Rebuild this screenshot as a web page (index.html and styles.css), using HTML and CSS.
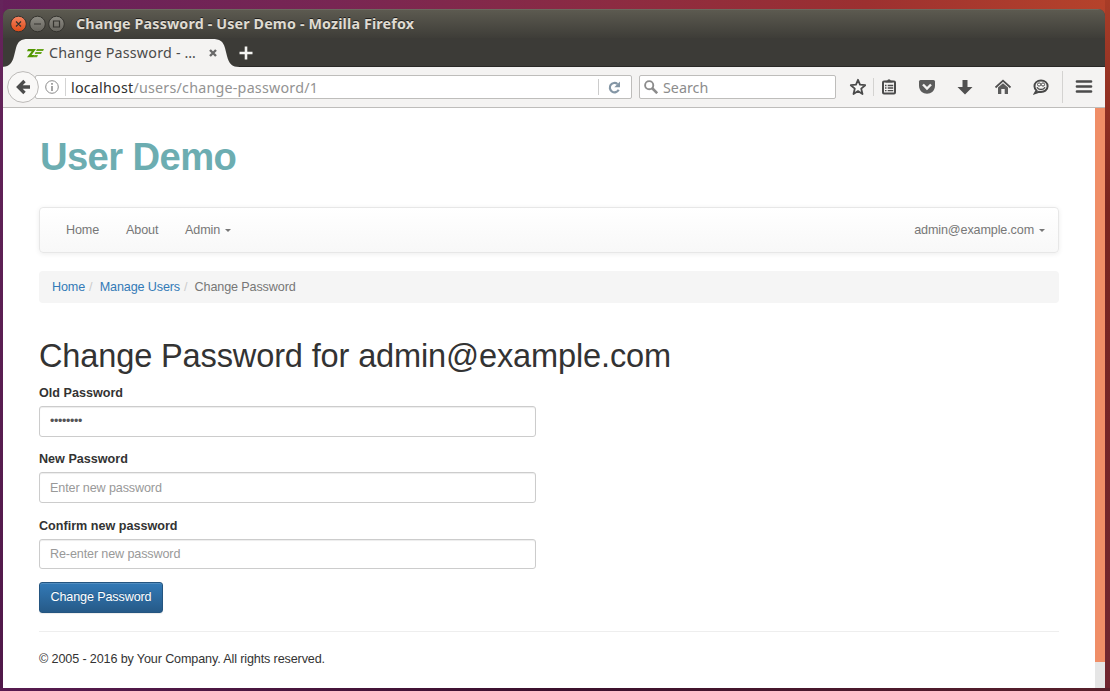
FILE: index.html
```
<!DOCTYPE html>
<html lang="en">
<head>
<meta charset="utf-8">
<title>Change Password - User Demo</title>
<link rel="stylesheet" href="styles.css">
</head>
<body>
<div class="window">
  <header class="chrome">
    <div class="titlebar">
      <svg class="controls" width="56" height="18" viewBox="0 0 56 18">
        <defs>
          <linearGradient id="close" x1="0" y1="0" x2="0" y2="1"><stop offset="0" stop-color="#f58462"/><stop offset="1" stop-color="#df4a16"/></linearGradient>
          <linearGradient id="gray" x1="0" y1="0" x2="0" y2="1"><stop offset="0" stop-color="#8e8c84"/><stop offset="1" stop-color="#66645d"/></linearGradient>
        </defs>
        <g stroke="#34332e">
          <circle cx="8.5" cy="9" r="7.8" fill="url(#close)"/>
          <circle cx="27.5" cy="9" r="7.8" fill="url(#gray)"/>
          <circle cx="46.5" cy="9" r="7.8" fill="url(#gray)"/>
          <path d="M6 6.5l5 5M11 6.5l-5 5M24 9h7M43.5 6h6v6h-6z" fill="none" stroke-width="1.2"/>
        </g>
      </svg>
      <span class="window-title">Change Password - User Demo - Mozilla Firefox</span>
    </div>
    <div class="tabs">
      <div class="tab">
        <svg class="tab-shape" width="240" height="28" viewBox="0 0 240 28"><path d="M0 28C9 28 12 25 14 17L16 9C18 2 21 0 28 0H212C220 0 223 2 225 9L227 17C229 25 232 28 240 28Z" fill="#f4f3f2"/></svg>
        <svg class="favicon" width="17" height="9" viewBox="0 0 17 9"><path d="M1 0H9L4.5 6H7.5L6.5 8.3H0L4.7 2.3H0Z" fill="#519600"/><path d="M10 0H17L16 2H9ZM8.5 3H15L14 5H7.8ZM7.4 6H11L10 8.3H6.5Z" fill="#68a51c"/></svg>
        <span class="tab-title">Change Password - …</span>
        <svg class="tab-close" width="8" height="8" viewBox="0 0 8 8"><path d="M1 1l6 6M7 1L1 7" stroke="#686868" stroke-width="2.4"/></svg>
      </div>
      <svg class="new-tab" width="14" height="14" viewBox="0 0 14 14"><path d="M7 .5v13M.5 7h13" stroke="#f5f5f2" stroke-width="2.6"/></svg>
    </div>
    <div class="toolbar">
      <svg class="back" width="32" height="32" viewBox="0 0 32 32"><circle cx="16" cy="16" r="15.4" fill="#f9f8f7" stroke="#bbb9b7"/><path d="M17.5 10L11.500 16L17.500 22M12 16H23" fill="none" stroke="#4c4c4c" stroke-width="3.4"/></svg>
      <div class="address">
        <svg class="info" width="14" height="14" viewBox="0 0 14 14"><circle cx="7" cy="7" r="6.3" fill="none" stroke="#8b8b8b"/><path d="M7 3v1.7M7 6v5" stroke="#858585" stroke-width="1.5"/></svg>
        <span class="url"><span class="host">localhost</span>/users/change-password/1</span>
        <span class="reload"><svg width="13" height="13" viewBox="0 0 13 13"><path d="M9.500 3A4.700 4.700 0 1 0 10.700 8.800" fill="none" stroke="#8496a5" stroke-width="2.200"/><path d="M12 .5V6.200H6.300Z" fill="#8496a5"/></svg></span>
      </div>
      <div class="search"><svg width="14" height="14" viewBox="0 0 14 14"><circle cx="5.2" cy="5.2" r="4.1" fill="none" stroke="#8c8c8c" stroke-width="1.9"/><path d="M8 8l5.2 5.2" stroke="#8c8c8c" stroke-width="2.6"/></svg><span class="search-text">Search</span></div>
      <svg class="actions" width="260" height="40" viewBox="0 0 260 40">
        <path d="M18 12.800L20 17.700L25.200 18.200L21.200 21.600L22.500 27L18 24.100L13.500 27L14.800 21.600L10.800 18.200L16 17.700Z" fill="#f8f8f7" stroke="#4b4b4b" stroke-width="1.8" stroke-linejoin="round"/>
        <path d="M33.5 11v18M222.5 4v32" stroke="#d4d3d1"/>
        <path d="M43 15.500q0-1 1-1h10q1 0 1 1v10q0 1-1 1h-10q-1 0-1-1Z" fill="#f4f3f2" stroke="#4b4b4b" stroke-width="2"/>
        <path d="M45.500 15.500v-1.700h1.700q.3-1.500 1.800-1.500t1.800 1.500h1.700v1.700Z" fill="#4b4b4b"/>
        <path d="M45 18.500h1.500M47.700 18.500h5.500M45 21h1.500M47.700 21h5.500M45 23.700h1.500M47.700 23.700h5.500" stroke="#4b4b4b" stroke-width="1.300"/>
        <path d="M80.500 13H93.500Q95 13 95 14.500V18.500C95 29.500 79 29.500 79 18.500V14.500Q79 13 80.500 13Z" fill="#5c5c5c"/>
        <path d="M83 17.500L87 21.500L91 17.500" fill="none" stroke="#f4f3f2" stroke-width="2.400"/>
        <path d="M122.500 13H127.500V20H132.500L125 27.500L117.500 20H122.500Z" fill="#505050"/>
        <path d="M155.500 20.500L163 13.700L170.500 20.500" fill="none" stroke="#505050" stroke-width="1.800"/>
        <path d="M158 20.500L163 16.200L168 20.500V27H164.700V22H161.300V27H158Z" fill="#5c5c5c"/>
        <path d="M201 13.600c-4 0-6.500 2.500-6.500 5.600 0 2 .8 3.500 2 4.300l-1.500 2.700 4-1.500c5.500 1 8.600-2 8.600-5.500 0-3.100-2.600-5.600-6.600-5.600Z" fill="#f4f3f2" stroke="#484848" stroke-width="2"/>
        <path d="M197 20.200c1.500 3 6.500 3 8 0" fill="none" stroke="#484848" stroke-width="1.400"/>
        <circle cx="199.100" cy="17.500" r="1.600" fill="#fff" stroke="#484848"/><circle cx="203" cy="17.500" r="1.600" fill="#fff" stroke="#484848"/>
        <path d="M237 14.500h14M237 19.500h14M237 24.500h14" stroke="#4b4b4b" stroke-width="2.700" stroke-linecap="round"/>
      </svg>
    </div>
  </header>
  <div class="viewport">
    <main class="page">
      <h1 class="brand"><span>User Demo</span></h1>
      <nav class="navbar">
        <a class="nav-home">Home</a><a class="nav-about">About</a><a class="nav-admin">Admin<i class="caret"></i></a>
        <a class="account">admin@example.com<i class="caret"></i></a>
      </nav>
      <div class="breadcrumb"><a>Home</a><span class="slash">/</span><a>Manage Users</a><span class="slash">/</span><span>Change Password</span></div>
      <h2 class="heading">Change Password for admin@example.com</h2>
      <form class="form">
        <div class="group"><label for="old">Old Password</label><input id="old" class="filled" type="password" value="password"></div>
        <div class="group"><label for="new">New Password</label><input id="new" type="password" placeholder="Enter new password"></div>
        <div class="group last"><label for="confirm">Confirm new password</label><input id="confirm" type="password" placeholder="Re-enter new password"></div>
        <button class="submit" type="button">Change Password</button>
      </form>
      <footer class="footer">© 2005 - 2016 by Your Company. All rights reserved.</footer>
    </main>
    <div class="scrollbar"><div class="thumb"></div></div>
  </div>
</div>
</body>
</html>
```
FILE: styles.css
```
* { box-sizing: border-box; }
body {
  margin: 0; width: 1110px; height: 691px; overflow: hidden; padding: 9px 5px 3px 3px;
  background:
    linear-gradient(90deg, #571b50, #3b102d 50%, #58202b) bottom / 100% 3px no-repeat,
    linear-gradient(#a83c27, #7a251f 30%, #6f2630) right / 5px 100% no-repeat,
    linear-gradient(#65245b, #501849) left / 3px 100% no-repeat,
    linear-gradient(90deg, #65205a, #782653 30%, #8c2b42 55%, #9c3030 78%, #b6432b);
}
.window { height: 679px; display: flex; flex-direction: column; border-radius: 7px 7px 0 0; overflow: hidden; }
.chrome { font-family: "Noto Sans", "Open Sans", sans-serif; background: #3c3b37; flex: none; }
.titlebar { height: 29px; display: flex; align-items: center; padding-left: 7px; border-top: 1px solid #6b695f; background: linear-gradient(#5c5a50, #3e3d38); }
.controls { flex: none; }
.window-title { margin-left: 10px; color: #dfdbd2; font-weight: 700; font-size: 14.3px; letter-spacing: .14px; line-height: 28px; white-space: nowrap; text-shadow: 0 -1px #22211f; }
.tabs { height: 29px; display: flex; align-items: flex-end; background: linear-gradient(#292826, #292826) bottom / 100% 1px no-repeat; }
.tab { position: relative; width: 232px; height: 28px; display: flex; align-items: center; padding-left: 24px; flex: none; }
.tab-shape { position: absolute; left: -3px; top: 0; }
.favicon, .tab-title, .tab-close { position: relative; flex: none; }
.tab-title { margin-left: 5px; width: 149px; font-size: 14.3px; line-height: 28px; letter-spacing: .2px; color: #4b4b4b; white-space: nowrap; }
.tab-close { margin-left: 11px; }
.new-tab { margin: 0 0 7px 4px; }
.toolbar { height: 41px; display: flex; align-items: center; background: #f4f3f2; border-bottom: 1px solid #bebdbb; padding-left: 4px; }
.back { position: relative; z-index: 1; flex: none; }
.address { width: 597px; height: 24px; margin-left: -4px; display: flex; align-items: center; background: #fff; border: 1px solid #bebdbb; border-radius: 2px; padding-left: 9px; flex: none; }
.info { flex: none; }
.url { height: 18px; margin-left: 6px; padding-left: 5px; border-left: 1px solid #d3d3d3; width: 533px; font-size: 14.3px; line-height: 19px; letter-spacing: .22px; color: #939393; }
.host { color: #303030; }
.reload { display: flex; align-items: center; height: 16px; padding-left: 9px; border-left: 1px solid #ccc; }
.search { width: 197px; height: 24px; margin-left: 7px; display: flex; align-items: center; background: #fff; border: 1px solid #bebdbb; border-radius: 2px; padding-left: 4px; flex: none; }
.search-text { margin-left: 5px; padding-top: 1px; font-size: 14.3px; line-height: 20px; color: #8c8c8c; }
.actions { flex: none; margin-left: 4px; }
.viewport { flex: 1; display: flex; background: #fff; font: 12.6px/18.6px "Liberation Sans", sans-serif; letter-spacing: -.13px; color: #333; }
.page { flex: 1; padding: 0 36px; }
.scrollbar { width: 10px; background: #e6e6e6; }
.thumb { height: 554px; background: #f08e67; }
h1, h2 { margin: 0; }
.brand { height: 99px; padding: 27px 0 0 1px; color: #6cadb1; font-size: 38.2px; line-height: 44px; font-weight: 700; letter-spacing: -.6px; }
.navbar { height: 46px; display: flex; align-items: center; padding: 0 13px 0 26px; color: #777; border: 1px solid #e7e7e7; border-radius: 4px; background: linear-gradient(#fff, #f8f8f8); box-shadow: 0 1px 5px rgba(0,0,0,.075); }
.nav-home { width: 60px; }
.nav-about { width: 59px; }
.account { margin-left: auto; }
.caret { display: inline-block; margin-left: 5px; vertical-align: middle; border-top: 3px solid; border-left: 3px solid transparent; border-right: 3px solid transparent; }
.breadcrumb { height: 32px; margin-top: 18px; padding-left: 13px; display: flex; align-items: center; border-radius: 4px; background: #f5f5f5; color: #777; }
.breadcrumb a { color: #337ab7; }
.slash { width: 14.6px; padding-left: 4px; color: #ccc; }
.heading { margin-top: 34px; height: 47px; font-weight: 400; font-size: 32.6px; letter-spacing: -.16px; line-height: 38px; white-space: nowrap; }
.form { width: 497px; }
.group { height: 66.4px; }
.group.last { height: 65px; }
.group label { display: block; height: 22px; line-height: 18px; font-weight: 700; letter-spacing: 0; }
.group input { display: block; width: 497px; height: 31px; padding: 0 10px; border: 1px solid #ccc; border-radius: 3px; background: #fff; color: #555; font: inherit; letter-spacing: inherit; box-shadow: inset 0 1px 1px rgba(0,0,0,.075); }
.group.last input { height: 30px; }
.group input.filled { font-size: 12.4px; letter-spacing: -.34px; padding-bottom: 2px; }
.group input::placeholder { color: #999; }
.submit { display: block; width: 124px; height: 31px; padding: 1px 0 0; border: 1px solid #245580; border-radius: 3px; color: #fff; font: inherit; letter-spacing: inherit; background: linear-gradient(#337ab7, #265a88); box-shadow: inset 0 1px rgba(255,255,255,.15), 0 1px 1px rgba(0,0,0,.075); text-shadow: 0 -1px rgba(0,0,0,.2); }
.footer { margin-top: 18px; padding-top: 18px; border-top: 1px solid #eee; }
```
